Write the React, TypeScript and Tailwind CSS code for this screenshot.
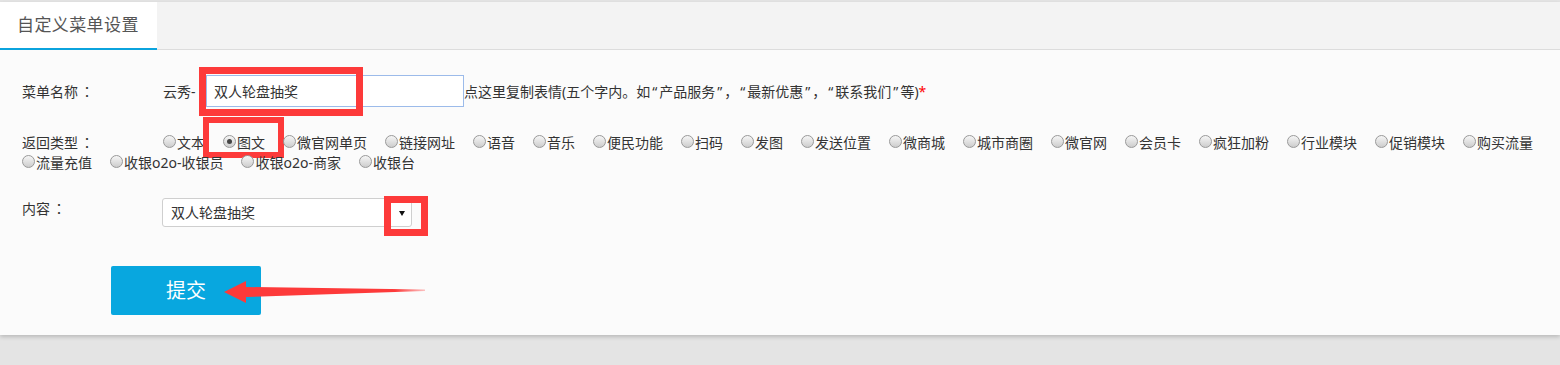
const font = { fontFamily: '"Noto Sans", "Noto Sans CJK SC", sans-serif' };
const tc = { fontFamily: '"Noto Sans CJK TC", sans-serif' };

const line1 = [
  "图文",
  "微官网单页",
  "链接网址",
  "语音",
  "音乐",
  "便民功能",
  "扫码",
  "发图",
  "发送位置",
  "微商城",
  "城市商圈",
  "微官网",
  "会员卡",
  "疯狂加粉",
  "行业模块",
  "促销模块",
  "购买流量",
];

const line2 = ["流量充值", "收银o2o-收银员", "收银o2o-商家", "收银台"];

const Label = ({ text, w }: { text: string; w: string }) => (
  <span className={`${w} shrink-0 whitespace-nowrap`}>
    {text}
    <span className="ml-[2px]" style={tc}>
      ：
    </span>
  </span>
);

const Q = ({ c }: { c: string }) => <span className="mx-[2px]">{c}</span>;

const Radio = ({ label, checked }: { label: string; checked?: boolean }) => {
  return (
    <span className="relative inline-flex items-center mr-[18px] whitespace-nowrap">
      <span className="w-[13px] h-[13px] mr-[1px] -mt-[3px] rounded-full border border-[#999] bg-gradient-to-b from-[#f6f6f6] to-[#cdcdcd] flex items-center justify-center shrink-0">
        {checked && <span className="w-[5px] h-[5px] rounded-full bg-[#444]" />}
      </span>
      <span>{label}</span>
      {checked && (
        <span className="absolute left-[-20px] top-[-15px] w-[81px] h-[41px] border-[6px] border-[#fd3a3a]" />
      )}
    </span>
  );
};

export default function App() {
  return (
    <div className="min-h-screen bg-[#e4e4e4] pt-[2px] text-[14px] text-[#333]" style={font}>
      <div className="bg-[#fbfbfb] shadow-[0_2px_4px_rgba(0,0,0,0.18)]">
        <div className="h-[48px] bg-[#f3f3f3] border-b border-[#dcdcdc] flex">
          <div className="w-[157px] h-[48px] -mb-px bg-white border-b-2 border-[#0ba3dd] pl-[17px] flex items-center text-[17px] tracking-[0.4px] text-[#555]">
            自定义菜单设置
          </div>
        </div>

        <div className="px-[22px] pb-[20px]">
          <div className="pt-[25px] flex items-center">
            <Label text="菜单名称" w="w-[141px]" />
            <span className="w-[43px] shrink-0">云秀-</span>
            <div className="relative">
              <div className="w-[258px] h-[32px] border border-[#9cbbea] bg-white pl-[7px] flex items-center">
                双人轮盘抽奖
              </div>
              <span className="absolute left-[-7px] top-[-8px] w-[164px] h-[49px] border-[7px] border-[#fd3a3a]" />
            </div>
            <span className="whitespace-nowrap">
              点这里复制表情(五个字内。如<Q c="“" />产品服务<Q c="”" />，<Q c="“" />最新优惠
              <Q c="”" />，<Q c="“" />联系我们<Q c="”" />等)
              <span className="text-[#f00]">*</span>
            </span>
          </div>

          <div className="mt-[25px] leading-[20px]">
            <div className="flex">
              <Label text="返回类型" w="w-[141px]" />
              <Radio label="文本" />
              {line1.map((t) => (
                <Radio key={t} label={t} checked={t === "图文"} />
              ))}
            </div>
            <div className="flex">
              {line2.map((t) => (
                <Radio key={t} label={t} />
              ))}
            </div>
          </div>

          <div className="mt-[25px] flex items-start leading-[20px]">
            <Label text="内容" w="w-[140px]" />
            <div className="relative w-[250px] h-[29px] border border-[#cfcfcf] rounded-[3px] bg-white pl-[8px] flex items-center">
              <span>双人轮盘抽奖</span>
              <span className="absolute left-[236px] top-[12px] w-0 h-0 border-l-[3px] border-r-[3px] border-t-[5px] border-l-transparent border-r-transparent border-t-[#111]" />
              <span className="absolute left-[221px] top-[-3px] w-[44px] h-[40px] border-[7px] border-[#fd3a3a]" />
            </div>
          </div>

          <div className="mt-[39px] ml-[89px] relative w-[150px]">
            <button className="w-[150px] h-[49px] bg-[#08a7df] rounded-[2px] text-white text-[20px]">
              提交
            </button>
            <svg
              className="absolute left-0 top-0 overflow-visible"
              width="320"
              height="49"
              viewBox="0 0 320 49"
            >
              <defs>
                <linearGradient id="fade" x1="0" x2="1" y1="0" y2="0">
                  <stop offset="0.85" stopColor="#fd3a3a" stopOpacity="1" />
                  <stop offset="1" stopColor="#fd3a3a" stopOpacity="0.3" />
                </linearGradient>
              </defs>
              <polygon
                points="113,26 135,15 135,21 314,23.5 314,25 135,31 135,37"
                fill="url(#fade)"
              />
            </svg>
          </div>
        </div>
      </div>
    </div>
  );
}
